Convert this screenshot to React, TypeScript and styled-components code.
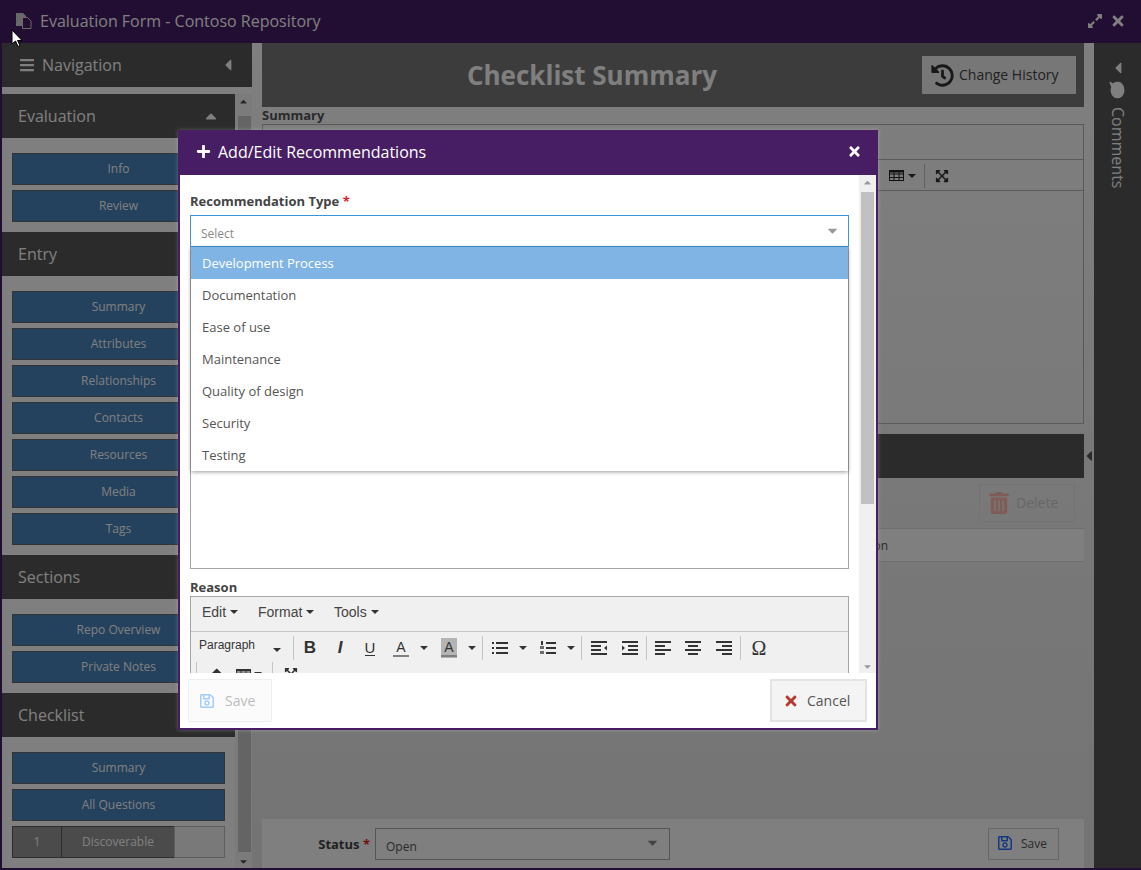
import React from "react";
import styled, { createGlobalStyle } from "styled-components";
import {
  FaBars,
  FaCaretDown,
  FaCaretLeft,
  FaCaretUp,
  FaComment,
  FaExpandAlt,
  FaExpandArrowsAlt,
  FaEraser,
  FaHistory,
  FaPlus,
  FaRegSave,
  FaTimes,
  FaTrashAlt,
} from "react-icons/fa";

const GlobalStyle = createGlobalStyle`
  html, body {
    margin: 0;
    padding: 0;
    height: 100%;
    overflow: hidden;
    font-family: "Open Sans", "Liberation Sans", sans-serif;
  }
  #root {
    height: 100%;
  }
  * {
    box-sizing: border-box;
  }
`;

const Page = styled.div`
  position: relative;
  width: 100vw;
  height: 100vh;
  overflow: hidden;
`;
const Window = styled.div`
  height: 100%;
  display: flex;
  flex-direction: column;
  background: linear-gradient(#ffffff, #e8e8e8);
  border: solid #441a66;
  border-width: 0 0 2px 2px;
`;
const TitleBar = styled.div`
  height: 43px;
  margin-left: -2px;
  flex: none;
  background: #441a66;
  color: #ffffff;
  display: flex;
  align-items: center;
  padding: 0 15px 2px 16px;
  font-size: 16px;
`;
const TitleText = styled.span`
  margin-left: 8px;
  flex: 1;
`;
const TitleButtons = styled.div`
  display: flex;
  align-items: center;
  gap: 7px;
  font-size: 16px;
`;
const Content = styled.div`
  flex: 1;
  min-height: 0;
  display: flex;
`;

const Sidebar = styled.div`
  width: 250px;
  flex: none;
  display: flex;
  flex-direction: column;
  background: #ffffff;
`;
const NavHeader = styled.div`
  height: 44px;
  flex: none;
  background: #565656;
  color: #ffffff;
  display: flex;
  align-items: center;
  padding: 0 15px 0 17px;
  font-size: 16px;
  gap: 7px;
  span {
    flex: 1;
  }
`;
const SideScroll = styled.div`
  flex: 1;
  min-height: 0;
  margin-top: 7px;
  display: flex;
`;
const SideList = styled.div`
  width: 233px;
  overflow: hidden;
`;
const SectionHeader = styled.div`
  height: 44px;
  background: #565656;
  color: #ffffff;
  display: flex;
  align-items: center;
  justify-content: space-between;
  padding: 0 15px 0 16px;
  font-size: 16px;
`;
const SectionBody = styled.div`
  padding: 15px 10px 10px 10px;
  display: flex;
  flex-direction: column;
  gap: 5px;
`;
const SideButton = styled.div`
  height: 32px;
  background: #4882bc;
  border: 1px solid #666666;
  color: #ffffff;
  font-size: 12px;
  display: flex;
  align-items: center;
  justify-content: center;
  padding-bottom: 2px;
`;
const QuestionRow = styled.div`
  height: 32px;
  display: flex;
  color: #ffffff;
  font-size: 12px;
`;
const QuestionCell = styled.div<{ $w: number; $empty?: boolean }>`
  width: ${(p) => p.$w}px;
  background: ${(p) => (p.$empty ? "#f2f2f2" : "#969696")};
  border: 1px solid ${(p) => (p.$empty ? "#bbbbbb" : "#5a5a5a")};
  margin-left: -1px;
  display: flex;
  align-items: center;
  justify-content: center;
  padding-bottom: 2px;
  &:first-child {
    margin-left: 0;
  }
`;
const VScroll = styled.div<{ $dim?: boolean }>`
  width: 17px;
  display: flex;
  flex-direction: column;
  align-items: center;
  background: ${(p) => (p.$dim ? "#f6f6f6" : "#f0f0f0")};
  color: ${(p) => (p.$dim ? "#505050" : "#999999")};
`;
const SideThumb = styled.div`
  flex: 1;
  width: 13px;
  background: #c9c9c9;
  margin-left: 1px;
  margin-top: 8px;
  margin-bottom: 2px;
`;
const ArrowCell = styled.div`
  height: 14px;
  flex: none;
  display: flex;
  align-items: center;
  justify-content: center;
  font-size: 11px;
`;

const Main = styled.div`
  position: relative;
  width: 842px;
  flex: none;
  padding: 0 10px;
  display: flex;
  flex-direction: column;
`;
const MainHeader = styled.div`
  position: relative;
  height: 64px;
  flex: none;
  background: #787878;
  color: #ffffff;
  display: flex;
  align-items: center;
  justify-content: center;
  padding-right: 162px;
  font-size: 26px;
  font-weight: 700;
`;
const HistoryButton = styled.div`
  position: absolute;
  right: 8px;
  top: 13px;
  width: 154px;
  height: 38px;
  background: #eeeeee;
  color: #444444;
  font-size: 14px;
  font-weight: 400;
  display: flex;
  align-items: center;
  padding: 0 0 2px 9px;
  gap: 5px;
  svg {
    font-size: 23px;
    color: #333333;
    margin-top: 2px;
  }
`;
const FieldLabel = styled.div`
  height: 17px;
  font-size: 13px;
  font-weight: 700;
  line-height: 16px;
  color: #555555;
  flex: none;
`;
const Required = styled.span`
  color: #e01b1b;
`;
const EditorBox = styled.div`
  height: 300px;
  flex: none;
  border: 1px solid #b5b5b5;
  display: flex;
  flex-direction: column;
`;
const EditorMenuBar = styled.div`
  height: 35px;
  flex: none;
  border-bottom: 1px solid #b5b5b5;
`;
const EditorTools = styled.div`
  height: 31px;
  flex: none;
  border-bottom: 1px solid #b5b5b5;
  display: flex;
  align-items: center;
  justify-content: flex-end;
  padding: 1px 134px 0 0;
  color: #111111;
`;
const DarkBar = styled.div`
  height: 44px;
  flex: none;
  margin-top: 10px;
  background: #565656;
`;
const ActionRow = styled.div`
  height: 50px;
  flex: none;
  display: flex;
  justify-content: flex-end;
  padding: 6px 9px 0 0;
`;
const DeleteButton = styled.div`
  width: 96px;
  height: 38px;
  border: 1px solid #e6e6e6;
  color: #d0d0d0;
  font-size: 14px;
  display: flex;
  align-items: center;
  padding: 0 0 1px 8px;
  gap: 6px;
  svg {
    font-size: 22px;
    color: #ffb8b0;
    margin-top: 1px;
  }
`;
const TableRow = styled.div`
  height: 34px;
  flex: none;
  border: solid #dedede;
  border-width: 1px 0;
  background: #ffffff;
  display: flex;
  align-items: center;
  justify-content: flex-end;
  padding-right: 196px;
  font-size: 12px;
  color: #555555;
`;
const Spacer = styled.div`
  flex: 1;
`;
const BottomPanel = styled.div`
  height: 49px;
  flex: none;
  background: #ffffff;
  display: flex;
  padding-top: 9px;
`;
const StatusLabel = styled.div`
  width: 108px;
  text-align: right;
  font-size: 13px;
  font-weight: 700;
  color: #444444;
  line-height: 32px;
  margin-right: 5px;
  white-space: nowrap;
`;
const StatusSelect = styled.div`
  width: 295px;
  height: 32px;
  border: 1px solid #aaaaaa;
  display: flex;
  align-items: center;
  justify-content: space-between;
  padding: 4px 9px 0 10px;
  font-size: 12px;
  color: #555555;
  svg {
    color: #888888;
    font-size: 15px;
    margin-top: -8px;
  }
`;
const PanelSave = styled.div`
  margin-left: auto;
  margin-right: 25px;
  width: 71px;
  height: 32px;
  border: 1px solid #cccccc;
  font-size: 12px;
  color: #555555;
  display: flex;
  align-items: center;
  padding: 0 0 2px 8px;
  gap: 8px;
  svg {
    font-size: 16px;
    color: #2b6fff;
  }
`;
const Handle = styled.div`
  position: absolute;
  top: 389px;
  right: 0;
  width: 10px;
  height: 48px;
  background: #f0f0f0;
  display: flex;
  align-items: center;
  justify-content: flex-end;
  font-size: 16px;
  color: #555555;
`;
const CommentsRail = styled.div`
  flex: 1;
  background: #565656;
  color: #ffffff;
  display: flex;
  flex-direction: column;
  align-items: center;
  padding-top: 16px;
  font-size: 16px;
`;
const RailIcon = styled.div`
  height: 16px;
  margin-top: 5px;
  display: flex;
  align-items: center;
  transform: rotate(90deg);
  font-size: 17px;
`;
const RailText = styled.div`
  writing-mode: vertical-rl;
  line-height: 20px;
  margin-top: 9px;
`;

const Mask = styled.div`
  position: absolute;
  inset: 0;
  background: rgba(0, 0, 0, 0.5);
`;
const Cursor = styled.svg`
  position: absolute;
  left: 11px;
  top: 29px;
`;

const Modal = styled.div`
  position: absolute;
  left: 178px;
  top: 130px;
  width: 700px;
  height: 600px;
  border: 2px solid #471e63;
  border-top: 0;
  background: #ffffff;
  display: flex;
  flex-direction: column;
  box-shadow: 0 0 4px rgba(255, 255, 255, 0.25);
`;
const ModalTitle = styled.div`
  height: 45px;
  flex: none;
  margin: 0 -2px;
  background: #471e63;
  color: #ffffff;
  display: flex;
  align-items: center;
  padding: 0 16px 2px 18px;
  font-size: 16px;
  svg {
    font-size: 15px;
    flex: none;
  }
  span {
    flex: 1;
    margin-left: 7px;
  }
`;
const ModalMiddle = styled.div`
  height: 498px;
  flex: none;
  display: flex;
`;
const ModalScroll = styled.div`
  position: relative;
  width: 679px;
  flex: none;
  overflow: hidden;
  padding: 17px 0 0 10px;
`;
const ModalLabel = styled.div`
  height: 23px;
  font-size: 13px;
  font-weight: 700;
  color: #444444;
  line-height: 18px;
`;
const SelectBox = styled.div`
  width: 659px;
  height: 32px;
  border: 1px solid #3a96d8;
  display: flex;
  align-items: center;
  justify-content: space-between;
  padding: 4px 8px 0 10px;
  font-size: 12px;
  color: #888888;
  svg {
    color: #999999;
    font-size: 15px;
    margin-top: -6px;
  }
`;
const Dropdown = styled.div`
  position: absolute;
  left: 11px;
  top: 72px;
  width: 657px;
  background: #ffffff;
  box-shadow: 0 1px 4px rgba(0, 0, 0, 0.4);
`;
const DropItem = styled.div<{ $active?: boolean }>`
  height: 32px;
  padding-left: 11px;
  display: flex;
  align-items: center;
  font-size: 13px;
  color: ${(p) => (p.$active ? "#ffffff" : "#555555")};
  background: ${(p) => (p.$active ? "#7fb4e5" : "#ffffff")};
`;
const TextArea = styled.div`
  width: 659px;
  height: 322px;
  border: 1px solid #a5a5a5;
`;
const ReasonLabel = styled.div`
  height: 18px;
  margin-top: 9px;
  font-size: 13px;
  font-weight: 700;
  color: #444444;
  line-height: 18px;
`;
const McePanel = styled.div`
  width: 659px;
  height: 120px;
  border: 1px solid #a5a5a5;
  background: #f0f0f0;
  color: #333333;
`;
const MceMenu = styled.div`
  height: 35px;
  border-bottom: 1px solid #c5c5c5;
  display: flex;
  align-items: center;
  padding: 0 0 4px 11px;
  font-family: "Liberation Sans", Arial, sans-serif;
  font-size: 14px;
  color: #444444;
`;
const MenuItem = styled.div<{ $w: number }>`
  width: ${(p) => p.$w}px;
  display: flex;
  align-items: center;
  gap: 4px;
`;
const Caret = styled.i`
  width: 0;
  height: 0;
  flex: none;
  border: solid transparent;
  border-width: 4px 4px 0 4px;
  border-top-color: #333333;
`;
const MceRow = styled.div`
  height: 30px;
  margin-top: 1px;
  display: flex;
  align-items: center;
`;
const MceWrapRow = styled(MceRow)`
  margin-top: -4px;
`;
const ListBox = styled.div`
  width: 101px;
  height: 30px;
  display: flex;
  align-items: center;
  justify-content: space-between;
  padding: 0 11px 0 8px;
  font-family: "Liberation Sans", Arial, sans-serif;
  font-size: 12px;
  span {
    margin-top: -6px;
  }
  i {
    margin-top: 3px;
  }
`;
const Sep = styled.div`
  width: 1px;
  height: 24px;
  margin: 0 1px;
  flex: none;
  background: #c5c5c5;
`;
const ToolButton = styled.div<{ $w: number }>`
  width: ${(p) => p.$w}px;
  height: 30px;
  flex: none;
  display: flex;
  align-items: center;
  justify-content: center;
  color: #333333;
`;
const SplitButton = styled.div`
  width: 48px;
  height: 30px;
  flex: none;
  display: flex;
  align-items: center;
  padding-left: 8px;
  gap: 11px;
`;
const IconSlot = styled.div<{ $fill?: boolean }>`
  width: 16px;
  height: 20px;
  background: ${(p) => (p.$fill ? "#b4b4b4" : "transparent")};
  display: flex;
  align-items: center;
  justify-content: center;
`;
const Letter = styled.span<{ $bold?: boolean; $italic?: boolean; $line?: boolean }>`
  font-family: "Liberation Sans", Arial, sans-serif;
  font-size: ${(p) => (p.$line ? 15 : 17)}px;
  line-height: ${(p) => (p.$line ? 14 : 16)}px;
  font-weight: ${(p) => (p.$bold ? 700 : 400)};
  font-style: ${(p) => (p.$italic ? "italic" : "normal")};
  border-bottom: ${(p) => (p.$line ? "1px solid #333333" : "none")};
`;
const ColorLetter = styled.span`
  width: 16px;
  font-family: "Liberation Sans", Arial, sans-serif;
  font-size: 14px;
  line-height: 15px;
  text-align: center;
  border-bottom: 2px solid #808080;
`;
const Omega = styled.span`
  font-family: "Liberation Serif", serif;
  font-size: 20px;
  line-height: 20px;
`;
const ModalThumb = styled.div`
  width: 13px;
  height: 312px;
  flex: none;
  background: #c1c1c1;
  margin-top: 3px;
`;
const ModalScrollSpace = styled.div`
  flex: 1;
`;
const ModalFooter = styled.div`
  flex: 1;
  display: flex;
  justify-content: space-between;
  padding: 6px 9px 0 8px;
`;
const FooterButton = styled.div<{ $disabled?: boolean }>`
  height: 43px;
  width: ${(p) => (p.$disabled ? 84 : 97)}px;
  border: ${(p) => (p.$disabled ? "1px solid #efefef" : "2px solid #e4e4e4")};
  background: ${(p) => (p.$disabled ? "#fbfbfb" : "#f4f4f4")};
  color: ${(p) => (p.$disabled ? "#bbbbbb" : "#555555")};
  font-size: 14px;
  display: flex;
  align-items: center;
  padding-left: ${(p) => (p.$disabled ? 10 : 11)}px;
  gap: ${(p) => (p.$disabled ? 10 : 8)}px;
  svg {
    font-size: 16px;
    color: ${(p) => (p.$disabled ? "#a5ccff" : "#b8392f")};
  }
`;

const recommendationTypes = [
  "Development Process",
  "Documentation",
  "Ease of use",
  "Maintenance",
  "Quality of design",
  "Security",
  "Testing",
];

// tinymce glyphs, plain bars on a 16 grid
function Bars({ rows }: { rows: [number, number][] }) {
  return (
    <svg width="16" height="14" viewBox="0 0 16 14" fill="#333">
      {rows.map(([x, w], i) => (
        <rect key={i} x={x} y={i * (12 / (rows.length - 1))} width={w} height="2" />
      ))}
    </svg>
  );
}

function Outdent({ flip }: { flip?: boolean }) {
  return (
    <svg width="16" height="14" viewBox="0 0 16 14" fill="#333">
      <rect x="0" y="0" width="16" height="2" />
      <rect x={flip ? 6 : 0} y="4" width="10" height="2" />
      <rect x={flip ? 6 : 0} y="8" width="10" height="2" />
      <rect x="0" y="12" width="16" height="2" />
      <path d={flip ? "M0 4.5l3 2.5-3 2.5z" : "M16 4.5l-3 2.5 3 2.5z"} />
    </svg>
  );
}

function BulletList() {
  return (
    <svg width="16" height="14" viewBox="0 0 16 14" fill="#333">
      <rect x="0" y="1" width="2" height="2" />
      <rect x="0" y="6" width="2" height="2" />
      <rect x="0" y="11" width="2" height="2" />
      <rect x="4" y="1" width="12" height="2" />
      <rect x="4" y="6" width="12" height="2" />
      <rect x="4" y="11" width="12" height="2" />
    </svg>
  );
}

function NumberList() {
  return (
    <svg width="16" height="14" viewBox="0 0 16 14" fill="#333">
      <rect x="1" y="0" width="2" height="4" />
      <rect x="0" y="5" width="4" height="3" opacity="0.7" />
      <rect x="0" y="10" width="4" height="3" opacity="0.7" />
      <rect x="6" y="1" width="10" height="2" />
      <rect x="6" y="6" width="10" height="2" />
      <rect x="6" y="11" width="10" height="2" />
    </svg>
  );
}

function TableGlyph({ color }: { color: string }) {
  return (
    <svg width="15" height="11" viewBox="0 0 15 11" fill="none" stroke={color}>
      <rect x="0.5" y="0.5" width="14" height="10" />
      <path d="M0 4h15M0 7.5h15M5 0v11M10 0v11" />
      <rect x="0" y="0" width="15" height="2" fill={color} />
    </svg>
  );
}

function PagesIcon() {
  return (
    <svg width="16" height="16" viewBox="0 0 16 16">
      <path d="M0 0h7l3 3v10H0z" fill="#d0d0d0" />
      <path d="M6.5 4.500h5l3.500 3.500v7.500h-8.500z" fill="#441a66" stroke="#e0d0d0" />
    </svg>
  );
}

export default function App() {
  return (
    <Page>
      <GlobalStyle />
      <Window>
        <TitleBar>
          <PagesIcon />
          <TitleText>Evaluation Form - Contoso Repository</TitleText>
          <TitleButtons>
            <FaExpandAlt />
            <FaTimes />
          </TitleButtons>
        </TitleBar>
        <Content>
          <Sidebar>
            <NavHeader>
              <FaBars />
              <span>Navigation</span>
              <FaCaretLeft size={18} />
            </NavHeader>
            <SideScroll>
              <SideList>
                <SectionHeader>
                  Evaluation
                  <FaCaretUp size={18} />
                </SectionHeader>
                <SectionBody>
                  <SideButton>Info</SideButton>
                  <SideButton>Review</SideButton>
                </SectionBody>
                <SectionHeader>Entry</SectionHeader>
                <SectionBody>
                  {["Summary", "Attributes", "Relationships", "Contacts", "Resources", "Media", "Tags"].map((s) => (
                    <SideButton key={s}>{s}</SideButton>
                  ))}
                </SectionBody>
                <SectionHeader>Sections</SectionHeader>
                <SectionBody>
                  <SideButton>Repo Overview</SideButton>
                  <SideButton>Private Notes</SideButton>
                </SectionBody>
                <SectionHeader>Checklist</SectionHeader>
                <SectionBody>
                  <SideButton>Summary</SideButton>
                  <SideButton>All Questions</SideButton>
                  <QuestionRow>
                    <QuestionCell $w={50}>1</QuestionCell>
                    <QuestionCell $w={114}>Discoverable</QuestionCell>
                    <QuestionCell $w={51} $empty />
                  </QuestionRow>
                </SectionBody>
              </SideList>
              <VScroll $dim>
                <ArrowCell>
                  <FaCaretUp />
                </ArrowCell>
                <SideThumb />
                <ArrowCell>
                  <FaCaretDown />
                </ArrowCell>
              </VScroll>
            </SideScroll>
          </Sidebar>
          <Main>
            <MainHeader>
              Checklist Summary
              <HistoryButton>
                <FaHistory />
                Change History
              </HistoryButton>
            </MainHeader>
            <FieldLabel>Summary</FieldLabel>
            <EditorBox>
              <EditorMenuBar />
              <EditorTools>
                <TableGlyph color="#222" />
                <Caret style={{ marginLeft: 4, marginRight: 7 }} />
                <Sep />
                <ToolButton $w={14} style={{ marginLeft: 9 }}>
                  <FaExpandArrowsAlt size={14} />
                </ToolButton>
              </EditorTools>
            </EditorBox>
            <DarkBar />
            <ActionRow>
              <DeleteButton>
                <FaTrashAlt />
                Delete
              </DeleteButton>
            </ActionRow>
            <TableRow>Action</TableRow>
            <Spacer />
            <BottomPanel>
              <StatusLabel>
                Status <Required>*</Required>
              </StatusLabel>
              <StatusSelect>
                Open
                <FaCaretDown />
              </StatusSelect>
              <PanelSave>
                <FaRegSave />
                Save
              </PanelSave>
            </BottomPanel>
            <Handle>
              <FaCaretLeft />
            </Handle>
          </Main>
          <CommentsRail>
            <FaCaretLeft size={18} />
            <RailIcon>
              <FaComment />
            </RailIcon>
            <RailText>Comments</RailText>
          </CommentsRail>
        </Content>
      </Window>
      <Mask />
      <Cursor width="12" height="19" viewBox="0 0 12 19">
        <path d="M1 1v14l3.500-3 2.500 5.500 2-1-2.500-5h4.500z" fill="#fff" stroke="#000" strokeWidth="1" />
      </Cursor>
      <Modal>
        <ModalTitle>
          <FaPlus />
          <span>Add/Edit Recommendations</span>
          <FaTimes />
        </ModalTitle>
        <ModalMiddle>
          <ModalScroll>
            <ModalLabel>
              Recommendation Type <Required>*</Required>
            </ModalLabel>
            <SelectBox>
              Select
              <FaCaretDown />
            </SelectBox>
            <TextArea />
            <ReasonLabel>Reason</ReasonLabel>
            <McePanel>
              <MceMenu>
                <MenuItem $w={56}>
                  Edit <Caret />
                </MenuItem>
                <MenuItem $w={76}>
                  Format <Caret />
                </MenuItem>
                <MenuItem $w={60}>
                  Tools <Caret />
                </MenuItem>
              </MceMenu>
              <MceRow>
                <ListBox>
                  <span>Paragraph</span>
                  <Caret />
                </ListBox>
                <Sep />
                <ToolButton $w={30}>
                  <Letter $bold>B</Letter>
                </ToolButton>
                <ToolButton $w={30}>
                  <Letter $bold $italic>
                    I
                  </Letter>
                </ToolButton>
                <ToolButton $w={30}>
                  <Letter $line>U</Letter>
                </ToolButton>
                <SplitButton>
                  <IconSlot>
                    <ColorLetter>A</ColorLetter>
                  </IconSlot>
                  <Caret />
                </SplitButton>
                <SplitButton>
                  <IconSlot $fill>
                    <ColorLetter>A</ColorLetter>
                  </IconSlot>
                  <Caret />
                </SplitButton>
                <Sep />
                <SplitButton>
                  <IconSlot>
                    <BulletList />
                  </IconSlot>
                  <Caret />
                </SplitButton>
                <SplitButton>
                  <IconSlot>
                    <NumberList />
                  </IconSlot>
                  <Caret />
                </SplitButton>
                <Sep />
                <ToolButton $w={31}>
                  <Outdent />
                </ToolButton>
                <ToolButton $w={31}>
                  <Outdent flip />
                </ToolButton>
                <Sep />
                <ToolButton $w={30}>
                  <Bars rows={[[0, 16], [0, 10], [0, 16], [0, 10]]} />
                </ToolButton>
                <ToolButton $w={30}>
                  <Bars rows={[[0, 16], [3, 10], [0, 16], [3, 10]]} />
                </ToolButton>
                <ToolButton $w={31}>
                  <Bars rows={[[0, 16], [6, 10], [0, 16], [6, 10]]} />
                </ToolButton>
                <Sep />
                <ToolButton $w={34}>
                  <Omega>Ω</Omega>
                </ToolButton>
              </MceRow>
              <MceWrapRow>
                <ToolButton $w={4} />
                <Sep />
                <ToolButton $w={34}>
                  <FaEraser size={13} />
                </ToolButton>
                <ToolButton $w={4} />
                <TableGlyph color="#333" />
                <Caret style={{ marginLeft: 3, marginRight: 9 }} />
                <Sep />
                <ToolButton $w={34}>
                  <FaExpandArrowsAlt size={14} />
                </ToolButton>
              </MceWrapRow>
            </McePanel>
            <Dropdown>
              {recommendationTypes.map((t, i) => (
                <DropItem key={t} $active={i === 0}>
                  {t}
                </DropItem>
              ))}
            </Dropdown>
          </ModalScroll>
          <VScroll>
            <ArrowCell>
              <FaCaretUp />
            </ArrowCell>
            <ModalThumb />
            <ModalScrollSpace />
            <ArrowCell>
              <FaCaretDown />
            </ArrowCell>
          </VScroll>
        </ModalMiddle>
        <ModalFooter>
          <FooterButton $disabled>
            <FaRegSave />
            Save
          </FooterButton>
          <FooterButton>
            <FaTimes />
            Cancel
          </FooterButton>
        </ModalFooter>
      </Modal>
    </Page>
  );
}
